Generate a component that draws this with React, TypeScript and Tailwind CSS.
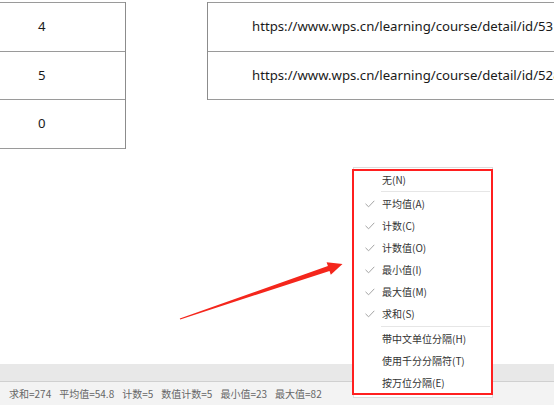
import React from "react";

const cjk = { fontFamily: '"Noto Sans CJK SC", "Noto Sans", sans-serif' };

function Check() {
  return (
    <svg width="10" height="8" viewBox="0 0 10 8" className="block">
      <polyline points="0.5,3.8 3.6,6.8 9.3,0.8" fill="none" stroke="#a3a3a3" strokeWidth="1" />
    </svg>
  );
}

type Item = { label: string; checked?: boolean };

function MenuItem({ label, checked }: Item) {
  return (
    <div className="h-[22px] flex items-center text-[10px] text-[#333333]">
      <div className="w-[28px] pl-[11px] flex items-center">{checked ? <Check /> : null}</div>
      <span className="leading-none">{label}</span>
    </div>
  );
}

function Sep() {
  return <div className="h-px bg-[#e6e6e6] ml-[27px] mr-[2px]" />;
}

export default function App() {
  const stats = ["求和=274", "平均值=54.8", "计数=5", "数值计数=5", "最小值=23", "最大值=82"];
  const tableFont = { fontFamily: '"Noto Sans", "Open Sans", sans-serif' };
  return (
    <div className="w-[554px] h-[405px] relative overflow-hidden bg-white flex flex-col" style={cjk}>
      <div className="flex-1 flex pt-[2px] items-start text-[13.2px] text-[#1a1a1a]" style={tableFont}>
        <div className="w-[126px] border-r border-[#8c8c8c] shrink-0">
          <div className="h-[49px] border-t border-[#9a9a9a] flex items-center pl-[38px]">4</div>
          <div className="h-[48px] border-t border-[#9a9a9a] flex items-center pl-[38px]">5</div>
          <div className="h-[50px] border-t border-b border-[#9a9a9a] flex items-center pl-[38px]">0</div>
        </div>
        <div className="ml-[81px] flex-1 border-l border-[#8c8c8c] whitespace-nowrap overflow-hidden">
          <div className="h-[49px] border-t border-[#9a9a9a] flex items-center pl-[44px]">
            https://www.wps.cn/learning/course/detail/id/531
          </div>
          <div className="h-[49px] border-t border-b border-[#9a9a9a] flex items-center pl-[44px]">
            https://www.wps.cn/learning/course/detail/id/528
          </div>
        </div>
      </div>
      <div className="h-[18px] bg-[#e8e8e8] border-b border-[#d0d0d0]" />
      <div className="h-[23px] bg-[#f3f3f3] flex items-center pl-[9px] gap-[8px] text-[10px] text-[#666666]">
        {stats.map((s) => (
          <span key={s} className="leading-none">{s}</span>
        ))}
      </div>

      <div className="absolute left-[353px] top-[167px] w-[140px] bg-white border border-[#dcdcdc] pt-px pb-[3px]">
        <MenuItem label="无(N)" />
        <Sep />
        <div className="mt-px" />
        <MenuItem label="平均值(A)" checked />
        <MenuItem label="计数(C)" checked />
        <MenuItem label="计数值(O)" checked />
        <MenuItem label="最小值(I)" checked />
        <MenuItem label="最大值(M)" checked />
        <MenuItem label="求和(S)" checked />
        <div className="mt-px" />
        <Sep />
        <div className="mt-px" />
        <MenuItem label="带中文单位分隔(H)" />
        <MenuItem label="使用千分分隔符(T)" />
        <MenuItem label="按万位分隔(E)" />
      </div>

      <div className="absolute left-[352px] top-[169px] w-[141px] h-[226px] border-2 border-[#ff1f1f]" />

      <svg className="absolute left-0 top-0" width="554" height="405" viewBox="0 0 554 405">
        <polygon
          points="179.8,318.4 327.9,266.1 326.6,262.3 342.5,264 330.8,274.7 329.5,270.9 180.2,319.6"
          fill="#f4261c"
        />
      </svg>
    </div>
  );
}
